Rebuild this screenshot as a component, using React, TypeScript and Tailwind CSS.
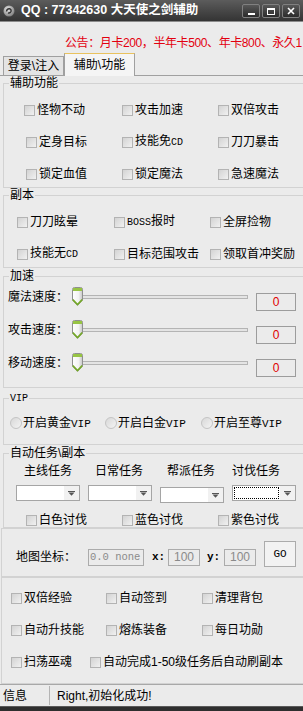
import React from "react";

const M = ({ children }: { children: React.ReactNode }) => (
  <span className="font-['Liberation_Mono',monospace] text-[10px]">{children}</span>
);

function Box() {
  return <span className="h-[11px] w-[11px] shrink-0 border border-[#b3b3b3] bg-linear-to-br from-[#d3d3d3] to-[#f1f1f1]" />;
}

function Check({ children, className = "" }: { children: React.ReactNode; className?: string }) {
  return (
    <div className={`flex h-[14px] items-center gap-[2px] whitespace-nowrap leading-[14px] ${className}`}>
      <Box />
      <span>{children}</span>
    </div>
  );
}

function Radio({ children, className = "" }: { children: React.ReactNode; className?: string }) {
  return (
    <div className={`flex h-[14px] items-center gap-[1px] whitespace-nowrap leading-[14px] ${className}`}>
      <span className="h-[12px] w-[12px] shrink-0 rounded-full border border-[#c4c4c4] bg-linear-to-br from-[#d8d8d8] to-[#f4f4f4]" />
      <span>{children}</span>
    </div>
  );
}

function Group({ title, className = "", children }: { title: React.ReactNode; className?: string; children: React.ReactNode }) {
  return (
    <fieldset className={`ml-[3px] border border-r-0 border-[#d2d2d2] ${className}`}>
      <legend className="ml-[5px] px-[1px] leading-[14px]">{title}</legend>
      {children}
    </fieldset>
  );
}

function Thumb() {
  return (
    <svg width="11" height="19" viewBox="0 0 11 19" className="absolute left-0 top-0">
      <defs>
        <linearGradient id="tb" x1="0" x2="1" y1="0" y2="0">
          <stop offset="0" stopColor="#ffffff" />
          <stop offset="0.6" stopColor="#f3f3f3" />
          <stop offset="1" stopColor="#c6c6c6" />
        </linearGradient>
      </defs>
      <path d="M0.5 2.5 Q0.5 0.5 2.5 0.5 H8.5 Q10.5 0.5 10.5 2.5 V13 L5.5 18.3 L0.5 13 Z" fill="url(#tb)" stroke="#8f8f8f" />
      <rect x="1" y="1" width="9" height="3" fill="#97c444" />
      <path d="M0.8 12.6 L5.5 17.6 L10.2 12.6" fill="none" stroke="#74a828" strokeWidth="1.6" />
    </svg>
  );
}

function Slider({ label }: { label: string }) {
  return (
    <div className="flex h-[20px] items-center pl-[4px]">
      <span className="w-[64px] whitespace-nowrap leading-[14px]">{label}</span>
      <div className="relative flex h-[20px] w-[176px] items-center">
        <div className="ml-[4px] h-[4px] w-full border border-[#b4b4b4] bg-[#e4e4e4]" />
        <Thumb />
      </div>
      <div className="ml-[8px] mt-[10px] h-[18px] w-[40px] border border-[#9c9c9c] text-center text-[12px] leading-[16px] text-[#e00000]">
        0
      </div>
    </div>
  );
}

function Combo({ focus = false, className = "" }: { focus?: boolean; className?: string }) {
  return (
    <div className={`flex h-[16px] w-[64px] border border-[#a5a5a5] bg-white ${className}`}>
      <div className="flex-1 p-[1px]">
        {focus && <div className="h-full w-full border border-dotted border-black" />}
      </div>
      <div className="flex w-[15px] items-center justify-center bg-[#f1f1f1]">
        <svg width="7" height="5" viewBox="0 0 7 5">
          <rect x="0" y="0" width="7" height="1" fill="#555" />
          <path d="M0.5 1.5 H6.5 L3.5 4.8 Z" fill="#555" />
        </svg>
      </div>
    </div>
  );
}

function WinBtn({ children }: { children: React.ReactNode }) {
  return (
    <div className="flex h-[14px] w-[18px] items-center justify-center rounded-[2px] border border-[#808080] bg-linear-to-b from-[#585858] to-[#2c2c2c]">
      {children}
    </div>
  );
}

export default function App() {
  return (
    <div className="h-[711px] w-[303px] overflow-hidden bg-[#ebebeb] font-['Liberation_Sans','Noto_Sans_CJK_SC',sans-serif] text-[12px] text-black">
      {/* title bar */}
      <div className="flex h-[22px] items-center border-b border-[#8c8c8c] bg-linear-to-b from-[#5c5c5c] to-[#343434] pl-[3px] pr-[3px]">
        <svg width="12" height="12" viewBox="0 0 12 12">
          <defs>
            <radialGradient id="ic" cx="0.4" cy="0.35" r="0.7">
              <stop offset="0" stopColor="#e8e8e8" />
              <stop offset="1" stopColor="#7a7a7a" />
            </radialGradient>
          </defs>
          <circle cx="6" cy="6" r="5.5" fill="url(#ic)" />
          <path d="M3.5 6.5 Q4 3.5 6.5 3.8 Q8.5 4.2 8 6.5 Q7 8.6 5 7.8" fill="none" stroke="#333" strokeWidth="1.4" />
        </svg>
        <span className="ml-[6px] whitespace-nowrap text-[12.5px] font-bold text-white">QQ : 77342630 大天使之剑辅助</span>
        <div className="ml-auto flex gap-[2px] pt-[1px]">
          <WinBtn>
            <div className="mt-[6px] h-[2px] w-[7px] bg-white" />
          </WinBtn>
          <WinBtn>
            <div className="h-[7px] w-[8px] border border-t-2 border-white" />
          </WinBtn>
          <WinBtn>
            <svg width="8" height="8" viewBox="0 0 8 8">
              <path d="M1 1 L7 7 M7 1 L1 7" stroke="#fff" strokeWidth="1.6" />
            </svg>
          </WinBtn>
        </div>
      </div>

      {/* notice */}
      <div className="h-[31px] whitespace-nowrap pl-[65px] pt-[14px] leading-[14px] tracking-[-0.4px] text-[#e3000f]">
        公告：月卡200，半年卡500、年卡800、永久1
      </div>

      {/* tabs */}
      <div className="flex h-[22px] items-end pl-[3px]">
        <div className="flex h-[19px] w-[61px] items-center justify-center border border-b-0 border-[#a0a0a0] bg-[#e4e4e4] leading-[14px]">
          {"登录\\注入"}
        </div>
        <div className="relative z-10 -mb-px flex h-[23px] w-[71px] items-center justify-center border border-b-0 border-[#a0a0a0] border-t-[#e9c25e] bg-[#f5f5f5] pb-[1px] leading-[14px]">
          {"辅助\\功能"}
        </div>
      </div>

      {/* tab page */}
      <div className="flex h-[609px] flex-col border-t border-[#a0a0a0]">
        <Group title="辅助功能" className="h-[112px]">
          <div className="grid grid-cols-[98px_96px_auto] gap-y-[18px] pl-[20px] pt-[13px]">
            <Check>怪物不动</Check>
            <Check>攻击加速</Check>
            <Check>双倍攻击</Check>
            <Check className="ml-[2px]">定身目标</Check>
            <Check>
              技能免<M>CD</M>
            </Check>
            <Check>刀刀暴击</Check>
            <Check className="ml-[2px]">锁定血值</Check>
            <Check>锁定魔法</Check>
            <Check>急速魔法</Check>
          </div>
        </Group>

        <Group title="副本" className="h-[80px]">
          <div className="grid grid-cols-[97px_96px_auto] gap-y-[18px] pl-[13px] pt-[13px]">
            <Check>刀刀眩晕</Check>
            <Check>
              <M>BOSS</M>报时
            </Check>
            <Check>全屏捡物</Check>
            <Check>
              技能无<M>CD</M>
            </Check>
            <Check>目标范围攻击</Check>
            <Check>领取首冲奖励</Check>
          </div>
        </Group>

        <Group title="加速" className="mt-[1px] h-[119px]">
          <div className="flex flex-col gap-[13px] pt-[4px]">
            <Slider label="魔法速度：" />
            <Slider label="攻击速度：" />
            <Slider label="移动速度：" />
          </div>
        </Group>

        <Group title={<M>VIP</M>} className="mt-[2px] h-[55px]">
          <div className="grid grid-cols-[95px_96px_auto] pl-[6px] pt-[10px]">
            <Radio>
              开启黄金<span className="font-['Liberation_Mono',monospace] text-[11px]">VIP</span>
            </Radio>
            <Radio>
              开启白金<span className="font-['Liberation_Mono',monospace] text-[11px]">VIP</span>
            </Radio>
            <Radio>
              开启至尊<span className="font-['Liberation_Mono',monospace] text-[11px]">VIP</span>
            </Radio>
          </div>
        </Group>

        <Group title={"自动任务\\副本"} className="mt-[1px] h-[82px]">
          <div className="flex pl-[20px] pt-[4px] leading-[14px]">
            <span className="w-[48px]">主线任务</span>
            <span className="ml-[23px] w-[48px]">日常任务</span>
            <span className="ml-[24px] w-[48px]">帮派任务</span>
            <span className="ml-[17px] w-[48px]">讨伐任务</span>
          </div>
          <div className="mt-[7px] flex items-start gap-[8px] pl-[12px]">
            <Combo />
            <Combo />
            <Combo className="mt-[2px]" />
            <Combo focus />
          </div>
          <div className="mt-[10px] grid grid-cols-[96px_96px_auto] pl-[22px]">
            <Check>白色讨伐</Check>
            <Check>蓝色讨伐</Check>
            <Check>紫色讨伐</Check>
          </div>
        </Group>

        {/* coordinates */}
        <div className="ml-[1px] h-[49px] border border-r-0 border-[#d2d2d2] pl-[14px] pt-[12px]">
          <div className="flex h-[32px] items-center">
            <span className="w-[72px] whitespace-nowrap leading-[14px]">地图坐标：</span>
            <div className="h-[17px] w-[56px] overflow-hidden whitespace-nowrap border border-[#ababab] pl-[1px] font-['Liberation_Mono',monospace] text-[10.5px] leading-[15px] text-[#8a8a8a]">
              0.0 none
            </div>
            <span className="ml-[8px] w-[16px] font-['Liberation_Mono',monospace] text-[11px] font-bold">x:</span>
            <div className="h-[17px] w-[32px] border border-[#ababab] text-center leading-[15px] text-[#8a8a8a]">100</div>
            <span className="ml-[7px] w-[17px] font-['Liberation_Mono',monospace] text-[11px] font-bold">y:</span>
            <div className="h-[17px] w-[32px] border border-[#ababab] text-center leading-[15px] text-[#8a8a8a]">100</div>
            <div className="ml-[8px] flex h-[26px] w-[32px] items-center justify-center self-start border border-[#ababab] bg-[#f2f2f2] font-['Liberation_Mono',monospace] text-[11px]">
              GO
            </div>
          </div>
        </div>

        {/* misc */}
        <div className="ml-[1px] h-[107px] border border-r-0 border-[#d2d2d2] pl-[9px] pt-[13px]">
          <div className="grid grid-cols-[95px_96px_auto] gap-y-[18px]">
            <Check>双倍经验</Check>
            <Check>自动签到</Check>
            <Check>清理背包</Check>
            <Check>自动升技能</Check>
            <Check>熔炼装备</Check>
            <Check>每日功勋</Check>
          </div>
          <div className="mt-[18px] flex">
            <Check className="w-[79px]">扫荡巫魂</Check>
            <Check>自动完成1-50级任务后自动刷副本</Check>
          </div>
        </div>
      </div>

      {/* status bar */}
      <div className="flex h-[22px] items-center border-t border-[#a8a8a8] bg-[#ebebeb] leading-[14px]">
        <span className="w-[49px] pl-[3px]">信息</span>
        <span className="h-[19px] w-px bg-[#b4b4b4]" />
        <span className="pl-[7px]">Right,初始化成功!</span>
      </div>
      <div className="h-[5px] border-t border-[#5a5a5a] bg-[#2e2e2e]" />
    </div>
  );
}
